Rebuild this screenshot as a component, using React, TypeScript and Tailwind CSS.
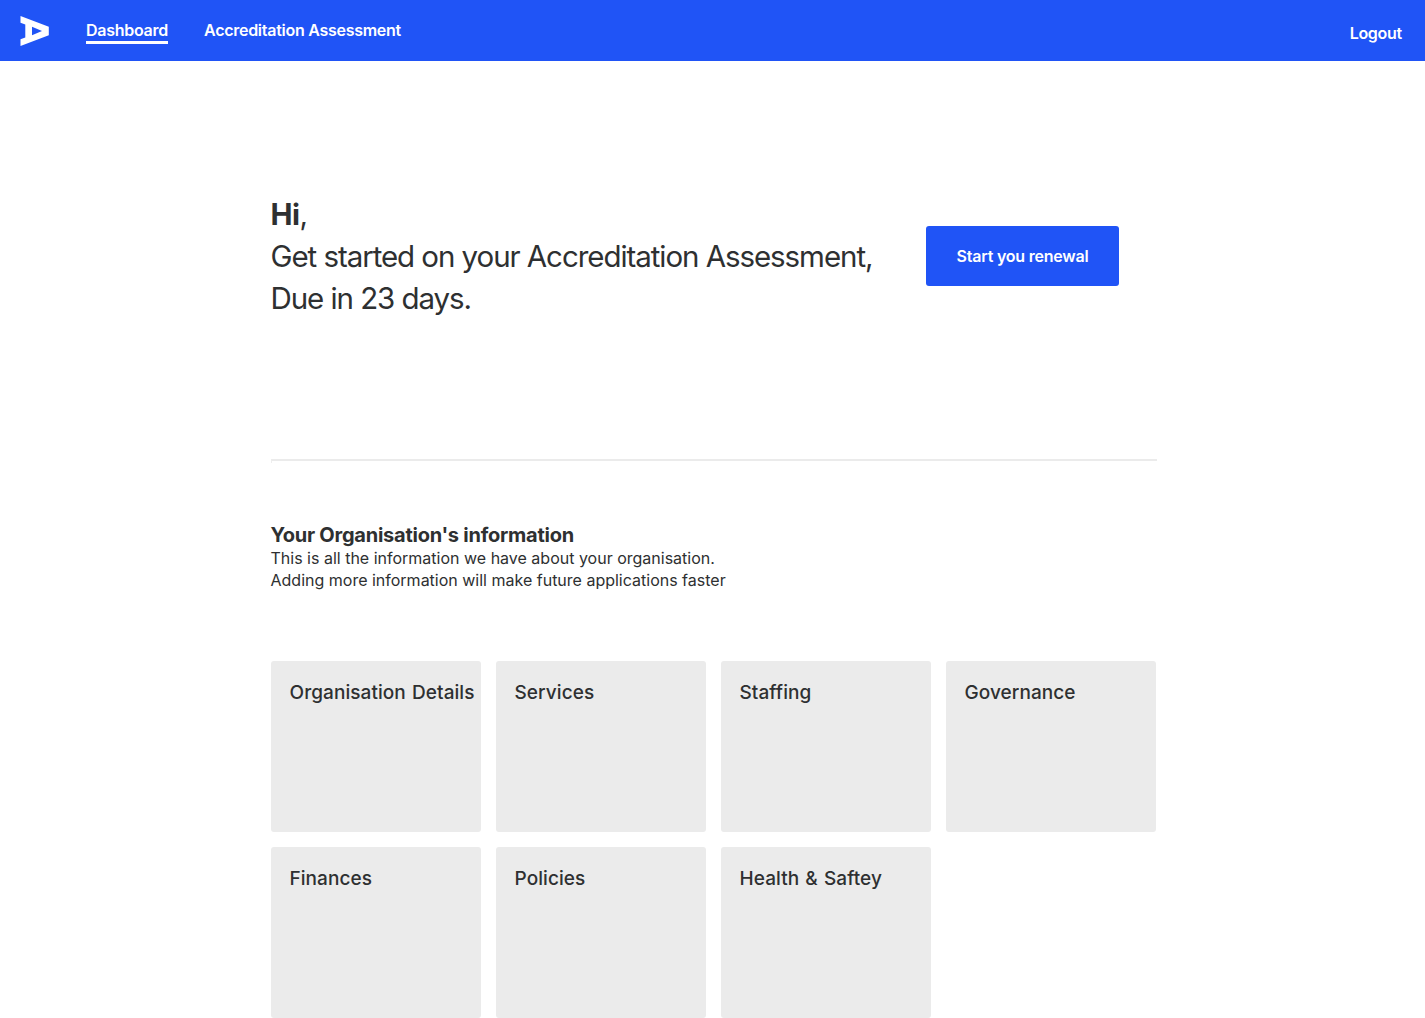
const cards = ['Organisation Details', 'Services', 'Staffing', 'Governance', 'Finances', 'Policies', 'Health & Saftey'];

export default function App() {
  return (
    <div className="h-[1018px] overflow-hidden bg-white font-['Inter',sans-serif] text-[#2e3031]">
      <header className="flex h-[61px] items-start bg-[#2054f6] pl-5 pr-[23px] text-base font-semibold leading-6 tracking-[-0.27px] text-white">
        <svg className="mt-4 h-[30px] w-[29px]" viewBox="0 0 29 30" fill="white">
          <path fillRule="evenodd" d="M.5 0 28.8 10.8v8.4L.5 30v-6.7l4.8-1.8V8.5L.5 6.7zM12 10.7v8.6l10-4.3z" />
        </svg>
        <nav className="ml-[37px] mt-[18px] flex">
          <a className="h-[26px] w-[82px] whitespace-nowrap border-b-3 border-white">Dashboard</a>
          <a className="ml-9 whitespace-nowrap">Accreditation Assessment</a>
        </nav>
        <a className="ml-auto mt-[21px]">Logout</a>
      </header>
      <main className="ml-[271px] w-[886px]">
        <section className="flex h-[398px] items-start">
          <h1 className="-ml-[0.5px] mt-[132px] w-[655.5px] text-[29.5px] leading-[42px] tracking-[-1.06px]">
            <b className="tracking-[-0.5px]">Hi</b>,<br />Get started on your Accreditation Assessment,<br />Due in 23 days.
          </h1>
          <button className="mt-[165px] h-[60px] w-[193px] rounded-[3px] bg-[#2054f6] text-base font-semibold tracking-[-0.22px] text-white">Start you renewal</button>
        </section>
        <div className="h-1 w-[885.5px] border-l border-t-2 border-l-[#eeeeee] border-t-[#ebebeb]" />
        <section className="-ml-[0.5px] pt-[60px]">
          <h2 className="text-xl font-bold leading-6 tracking-[-0.24px]">Your Organisation's information</h2>
          <p className="text-base leading-[22px]">This is all the information we have about your organisation.<br />Adding more information will make future applications faster</p>
        </section>
        <section className="mt-[70px] grid grid-cols-[repeat(4,210px)] gap-[15px]">
          {cards.map(title => (
            <article key={title} className="h-[171px] whitespace-nowrap rounded-[3px] bg-[#ebebeb] pl-[18.5px] pt-5 text-[19px] font-medium leading-6 tracking-[0.07px] [word-spacing:1px]">{title}</article>
          ))}
        </section>
      </main>
    </div>
  );
}
